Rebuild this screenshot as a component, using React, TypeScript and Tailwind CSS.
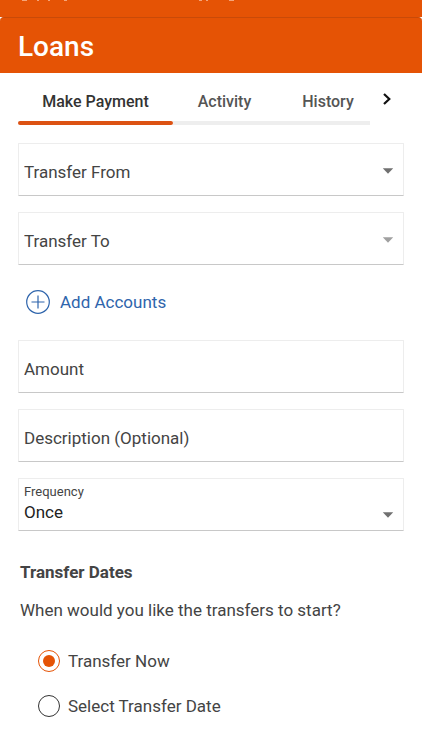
import React, { useState } from 'react';

const tabs = [
  { name: 'Make Payment', width: 'w-[155px]', inset: '' },
  { name: 'Activity', width: 'w-[103px]', inset: '' },
  { name: 'History', width: 'w-[94px]', inset: 'pl-2.5' },
];

const startOptions = [
  { value: 'now', label: 'Transfer Now' },
  { value: 'date', label: 'Select Transfer Date' },
];

const boxStyle = 'relative h-[53px] rounded-[1px] border border-[#ededed] border-b-[#c8c8c8] bg-white';

interface SelectFieldProps {
  id: string;
  label: string;
  options: string[];
  muted?: boolean;
}

const Caret: React.FC<{ className: string }> = ({ className }) => (
  <svg viewBox="0 0 12 6" className={`pointer-events-none absolute right-[9px] h-[6px] w-3 ${className}`} aria-hidden="true">
    <path d="M0.8 0.3h10.4L6 5.7z" fill="currentColor" />
  </svg>
);

const SelectField: React.FC<SelectFieldProps> = ({ id, label, options, muted }) => (
  <div className={boxStyle}>
    <select
      id={id}
      aria-label={label}
      defaultValue=""
      className="h-full w-full appearance-none bg-transparent px-[5px] pt-1.5 text-[17px] text-[#444444] outline-none"
    >
      <option value="">{label}</option>
      {options.map(o => <option key={o}>{o}</option>)}
    </select>
    <Caret className={muted ? 'top-6 text-[#a0a0a0]' : 'top-6 text-[#707070]'} />
  </div>
);

const TextField: React.FC<{ id: string; label: string }> = ({ id, label }) => (
  <div className={boxStyle}>
    <input
      id={id}
      type="text"
      aria-label={label}
      placeholder={label}
      className="h-full w-full bg-transparent px-[5px] pt-1 text-[17px] text-[#222222] placeholder-[#444444] outline-none"
    />
  </div>
);

export default function App() {
  const [activeTab, setActiveTab] = useState('Make Payment');
  const [when, setWhen] = useState('now');

  return (
    <div className="min-h-screen bg-white font-['Roboto','Liberation_Sans',sans-serif] text-[#444444]">
      <div className="h-[17px] bg-[#e55305]">
        <svg className="h-1 w-full" aria-hidden="true">
          <g fill="#f5a478">
            <rect x="22" width="5" height="1" />
            <rect x="37" width="2" height="1" />
            <rect x="48" width="2" height="1" />
            <rect x="64" width="3" height="1" />
            <rect x="199" width="3" height="1" />
            <rect x="206" width="2" height="1" />
            <rect x="229" width="5" height="1" />
          </g>
        </svg>
      </div>

      <header className="flex h-14 items-center rounded-t-[4px] border-t border-[#c94a08] bg-[#e55305] px-[18px] pt-0.5">
        <h1 className="text-[28px] leading-8 font-medium text-white">Loans</h1>
      </header>

      <nav className="flex h-[52px] px-[18px]">
        <div className="flex grow" role="tablist">
          {tabs.map(tab => (
            <button
              key={tab.name}
              role="tab"
              aria-selected={activeTab === tab.name}
              onClick={() => setActiveTab(tab.name)}
              className={`flex h-full grow flex-col justify-end ${tab.width}`}
            >
              <span className={`w-full pb-[9px] text-center text-base leading-5 font-medium ${tab.inset} ${activeTab === tab.name ? 'text-[#333333]' : 'text-[#555555]'}`}>
                {tab.name}
              </span>
              <span className={activeTab === tab.name ? 'h-1 w-full rounded-full bg-[#dc5213]' : 'h-1 w-full bg-[#eeeeee]'} />
            </button>
          ))}
        </div>
        <button aria-label="More tabs" className="flex w-[34px] items-center justify-center">
          <svg viewBox="0 0 10 14" className="h-[14px] w-[10px]" aria-hidden="true">
            <path d="M2 2l5.3 5L2 12" fill="none" stroke="#111111" strokeWidth="2.2" />
          </svg>
        </button>
      </nav>

      <main className="px-[18px] pt-[18px] pb-6">
        <div className="space-y-4">
          <SelectField id="from" label="Transfer From" options={['Checking', 'Savings']} />
          <SelectField id="to" label="Transfer To" options={['Loan']} muted />
        </div>

        <button className="mt-[25px] mb-[26px] ml-2 flex h-6 items-center gap-2.5 text-[17px] text-[#2f65ac]">
          <svg viewBox="0 0 24 24" className="h-6 w-6" fill="none" stroke="currentColor" strokeWidth="1.2" aria-hidden="true">
            <circle cx="12" cy="12" r="11.3" />
            <path d="M12 5.5v13M5.5 12h13" />
          </svg>
          <span className="pt-0.5">Add Accounts</span>
        </button>

        <div className="space-y-4">
          <TextField id="amount" label="Amount" />
          <TextField id="description" label="Description (Optional)" />
          <div className={boxStyle}>
            <label htmlFor="frequency" className="block px-[5px] pt-[5px] text-[13px] leading-4">Frequency</label>
            <select id="frequency" className="block h-[22px] w-full appearance-none bg-transparent px-[5px] text-[17px] text-[#222222] outline-none">
              <option>Once</option>
              <option>Weekly</option>
              <option>Monthly</option>
            </select>
            <Caret className="bottom-3 text-[#707070]" />
          </div>
        </div>

        <h2 className="mt-[29px] ml-0.5 text-[17px] leading-6 font-bold">Transfer Dates</h2>
        <fieldset className="ml-0.5">
          <legend className="pt-3.5 text-[17px] leading-6">When would you like the transfers to start?</legend>
          <div className="mt-[27px] ml-[18px] space-y-[21px]">
            {startOptions.map(o => (
              <label key={o.value} className="flex h-6 items-center gap-2 text-[17px]">
                <input
                  type="radio"
                  name="when"
                  value={o.value}
                  checked={when === o.value}
                  onChange={() => setWhen(o.value)}
                  className="grid h-[22px] w-[22px] shrink-0 appearance-none place-items-center rounded-full border border-[#333333] before:h-3 before:w-3 before:rounded-full checked:border-[#e55305] checked:before:bg-[#e55305]"
                />
                <span className="pt-px">{o.label}</span>
              </label>
            ))}
          </div>
        </fieldset>
      </main>
    </div>
  );
}
